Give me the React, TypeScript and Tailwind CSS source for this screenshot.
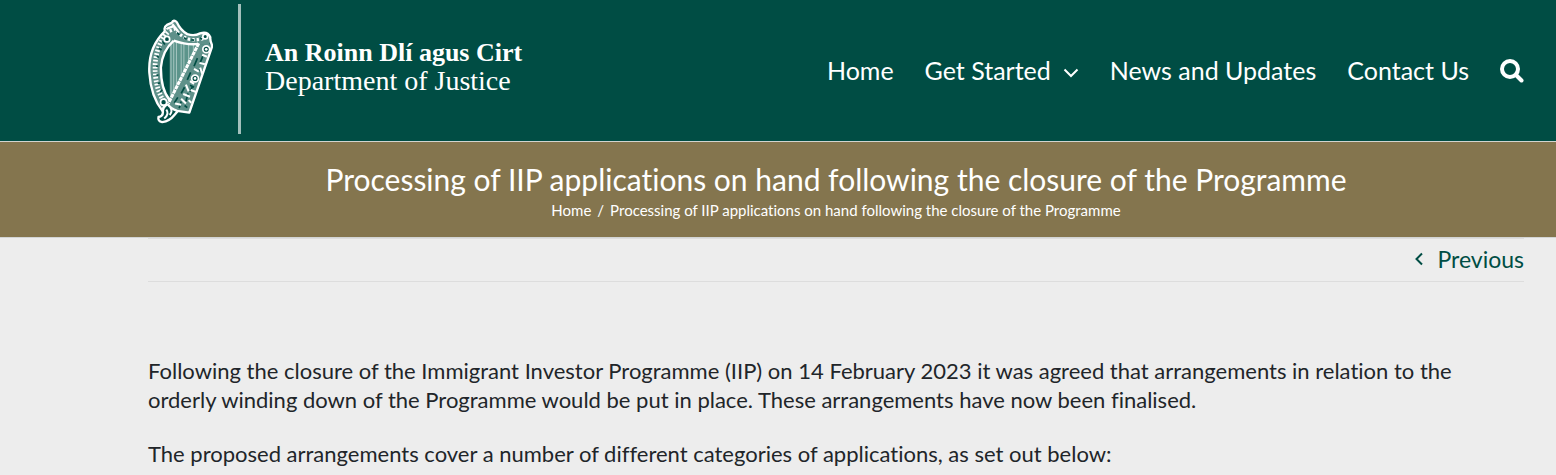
const navItem = "flex items-center text-[25px] leading-8 text-white";

const HarpLogo = () => (
    <svg viewBox="24 54 192 312" className="mt-1 h-[106px] w-[65px] shrink-0" fill="none" stroke="#fff" aria-hidden="true">
        <path d="M88 120L172 130L88 300Z" fill="#5c948b" stroke="none" />
        <path d="M92 125V285M100 122V276M108 122V262M122 125V240M130 128V228M144 131V205M158 132V182" stroke="#a5c5c0" strokeWidth="3" />
        <g fill="#5f918a" stroke="none">
            <path d="M74 92Q24 140 28 215Q32 285 68 330L88 300Q62 265 62 200Q66 150 100 120L94 74Z" />
            <path d="M78 78L100 60Q120 90 140 101Q160 108 178 99Q200 92 208 110L205 134L172 130Q140 134 100 120Z" />
            <path d="M172 130L214 132L146 333L110 328L84 308Z" />
        </g>
        <g strokeWidth="7" strokeLinejoin="round">
            <path d="M74 92Q70 80 80 74L94 68Q100 56 109 66Q120 90 140 101Q160 108 178 99Q200 92 208 110Q207 122 214 136L146 333L110 328Q90 320 82 308" />
            <path d="M74 92Q24 140 28 215Q32 285 68 330" />
            <path d="M100 120Q66 150 62 200Q62 265 88 296" />
            <path d="M78 86L98 78M96 72L112 92" />
            <path d="M100 120Q140 134 172 130" />
            <path d="M82 308Q66 315 68 332Q68 344 55 346Q52 358 66 361Q88 358 102 340L112 328" />
        </g>
        <path d="M174 128L84 306" strokeWidth="9" strokeDasharray="12 2" />
        <path d="M82 96Q50 130 45 190Q43 265 76 306" strokeWidth="14" strokeDasharray="5 5" />
        <path d="M88 92L104 86Q120 108 145 116Q175 122 198 108" strokeWidth="10" strokeDasharray="7 6" />
        <g stroke="#004d44" strokeWidth="5">
            <path d="M66 122L74 132M56 142L64 148M50 166L56 170M48 196H54M49 222H55M53 248L59 245M60 272L66 266" />
            <path d="M110 96L116 104M130 112L138 116M152 118L160 119M178 112L184 116" />
            <path d="M186 166L178 186M170 172L160 196M174 206L184 210M150 214L140 236M148 252L160 258M132 258L122 276M142 276L136 300M112 288L102 304M122 300L116 320M132 312L140 318M156 254L148 272" />
        </g>
        <path d="M184 162L198 168M176 186L192 190M178 200L184 218M160 204L174 212M148 240L160 248M136 250L144 270M150 266L166 272M128 278L148 286M122 292L136 306M104 306L122 310M144 296L152 304" strokeWidth="6" />
        <g fill="#004d44" strokeWidth="5">
            <circle cx="196" cy="146" r="10" />
            <circle cx="163" cy="232" r="10" />
            <circle cx="70" cy="302" r="9" />
            <circle cx="80" cy="116" r="8" />
            <circle cx="193" cy="108" r="7" />
        </g>
        <g fill="#fff" stroke="none">
            <circle cx="196" cy="146" r="4" />
            <circle cx="163" cy="232" r="4" />
        </g>
        <path d="M78 324Q88 336 72 350M90 318Q98 328 88 340" strokeWidth="6" />
    </svg>
);

const SearchIcon = () => (
    <svg viewBox="0 0 24 24" className="mt-0.5 size-6" fill="none" stroke="currentColor" aria-hidden="true">
        <circle cx="10" cy="10" r="8" strokeWidth="4" />
        <path d="M16 16L21.5 21.5" strokeWidth="4" strokeLinecap="round" />
    </svg>
);

const App = () => {
    return (
        <div className="min-h-screen bg-[#ededed] font-['Lato',sans-serif] text-[#212529] [font-variant-ligatures:none]">
            <header className="flex items-center justify-between border-b border-[#d2d4cf] bg-[#004d44] pt-1 pr-8 pb-[7px] pl-[148px]">
                <a href="#" className="flex items-center font-['Liberation_Serif',serif] text-white">
                    <HarpLogo />
                    <span className="mr-6 ml-[25px] h-[130px] w-[3px] bg-[#a3c0bc]" />
                    <span className="flex flex-col pb-1 text-[28px] leading-7">
                        <strong className="text-[26px]">An Roinn Dlí agus Cirt</strong>
                        <span>Department of Justice</span>
                    </span>
                </a>
                <nav className="flex items-center gap-[31px] pt-0.5">
                    <a href="#" className={navItem}>Home</a>
                    <a href="#" className={navItem}>
                        Get Started
                        <svg viewBox="0 0 16 10" className="mt-1.5 ml-3 h-[10px] w-4" fill="none" stroke="currentColor" strokeWidth="2" aria-hidden="true">
                            <path d="M1.5 1.5L8 8L14.5 1.5" />
                        </svg>
                    </a>
                    <a href="#" className={navItem}>News and Updates</a>
                    <a href="#" className={navItem}>Contact Us</a>
                    <button type="button" aria-label="Search" className="text-white">
                        <SearchIcon />
                    </button>
                </nav>
            </header>

            <section className="border-b border-[#d2d4d4] bg-[#84754e] pt-[18px] pr-8 pb-[15px] pl-[148px] text-center text-white">
                <h1 className="text-[30px] leading-[38px]">
                    Processing of IIP applications on hand following the closure of the Programme
                </h1>
                <nav className="flex justify-center gap-[6px] text-[15px] leading-6">
                    <a href="#">Home</a>
                    <span>/</span>
                    <span>Processing of IIP applications on hand following the closure of the Programme</span>
                </nav>
            </section>

            <main className="pr-8 pl-[148px]">
                <div className="flex justify-end border-y border-[#dddddd]">
                    <a href="#" className="flex items-center gap-[14px] pb-0.5 text-[23px] leading-10 text-[#004d44]">
                        <svg viewBox="0 0 8 14" className="h-[14px] w-2" fill="none" stroke="currentColor" strokeWidth="2" aria-hidden="true">
                            <path d="M7 1.5L1.5 7L7 12.5" />
                        </svg>
                        Previous
                    </a>
                </div>
                <article className="pt-[74px] text-[22px] leading-[29px]">
                    <p className="mb-[25px]">
                        Following the closure of the Immigrant Investor Programme (IIP) on 14 February 2023 it was agreed that arrangements in relation to the orderly winding down of the Programme would be put in place. These arrangements have now been finalised.
                    </p>
                    <p>The proposed arrangements cover a number of different categories of applications, as set out below:</p>
                </article>
            </main>
        </div>
    );
};

export default App;
